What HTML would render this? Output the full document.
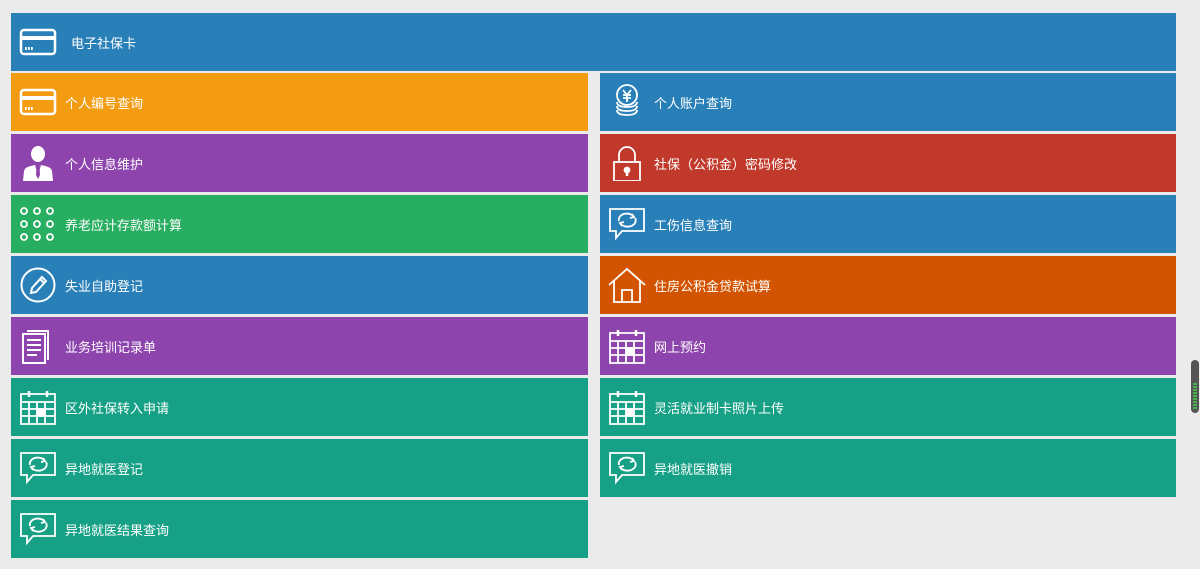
<!DOCTYPE html>
<html><head><meta charset="utf-8"><style>
body{margin:0;width:1200px;height:569px;background:#ebebeb;position:relative;overflow:hidden;font-family:"Liberation Sans","Noto Sans CJK SC",sans-serif}
.t{position:absolute;height:58px;color:#fff;font-size:13px;line-height:58px}
.t svg{position:absolute;left:8px;top:11px;width:38px;height:36px}
.t span{position:absolute;left:54px;top:2px}
.L{left:11px;width:577px}.R{left:600px;width:576px}
.b{background:#2980b9}.o{background:#f39c12}.p{background:#8e44ad}.g{background:#27ae60}.r{background:#c0392b}.d{background:#d35400}.e{background:#16a085}
</style></head><body>
<svg width="0" height="0" style="position:absolute">
<defs>
<symbol id="card" viewBox="0 0 38 36"><rect x="2" y="6" width="34" height="24" rx="3" fill="none" stroke="#fff" stroke-width="2.5"/><rect x="2" y="12" width="34" height="4" fill="#fff"/><rect x="6" y="23" width="1.8" height="3" fill="#fff"/><rect x="9" y="23" width="1.8" height="3" fill="#fff"/><rect x="12" y="23" width="1.8" height="3" fill="#fff"/></symbol>
<symbol id="person" viewBox="0 0 38 36"><ellipse cx="19" cy="9" rx="7" ry="8" fill="#fff"/><path d="M4 36 L5 26 Q6 22 12 21 L16 20 L19 30 L22 20 L26 21 Q32 22 33 26 L34 36Z" fill="#fff"/><path d="M17.5 22 L20.5 22 L21 30 L19 34 L17 30Z" fill="#8e44ad"/></symbol>
<symbol id="dots" viewBox="0 0 38 36" fill="none" stroke="#fff" stroke-width="1.8"><circle cx="5" cy="5" r="3"/><circle cx="18" cy="5" r="3"/><circle cx="31" cy="5" r="3"/><circle cx="5" cy="18" r="3"/><circle cx="18" cy="18" r="3"/><circle cx="31" cy="18" r="3"/><circle cx="5" cy="31" r="3"/><circle cx="18" cy="31" r="3"/><circle cx="31" cy="31" r="3"/></symbol>
<symbol id="pen" viewBox="0 0 38 36" fill="none" stroke="#fff" stroke-width="2"><circle cx="19" cy="18" r="16.5"/><path d="M12 26 L13 21 L23 10 L27 14 L17 25 Z M21 12 L25 16"/></symbol>
<symbol id="doc" viewBox="0 0 38 36" fill="none" stroke="#fff" stroke-width="2"><path d="M8 3 H29 V32"/><rect x="4" y="6" width="22" height="29" fill="#8e44ad"/><path d="M8 12H22M8 17H22M8 22H22M8 27H18"/></symbol>
<symbol id="cal" viewBox="0 0 38 36" fill="none" stroke="#fff" stroke-width="1.8"><path d="M2 5H36V35H2Z"/><path d="M2 13H36M2 20H36M2 27H36M10 13V35M18 13V35M26 13V35"/><path d="M10 2V8M28 2V8" stroke-width="2.5"/><rect x="18" y="20" width="8" height="7" fill="#fff"/></symbol>
<symbol id="chat" viewBox="0 0 38 36" fill="none" stroke="#fff" stroke-width="1.8"><path d="M2 3H36V25H14L8 32V25H2Z"/><path d="M11 15A8 6 0 0 1 26 11M27 12A8 6 0 0 1 12 17"/><path d="M24 8L26 11L22 12M14 20L12 17L16 16"/></symbol>
<symbol id="coin" viewBox="0 0 38 36" fill="none" stroke="#fff" stroke-width="1.8"><circle cx="19" cy="11" r="10"/><path d="M15 6L19 11L23 6M19 11V18M15 11H23M15 14H23"/><path d="M9 18Q9 23 19 23Q29 23 29 18M9 22Q9 27 19 27Q29 27 29 22M9 26Q9 31 19 31Q29 31 29 26"/></symbol>
<symbol id="lock" viewBox="0 0 38 36" fill="none" stroke="#fff" stroke-width="1.8"><path d="M11 17V10A8 8 0 0 1 27 10V17"/><rect x="6" y="17" width="26" height="19"/><circle cx="19" cy="25" r="2.5" fill="#fff"/><path d="M19 26V31" stroke-width="2.5"/></symbol>
<symbol id="house" viewBox="0 0 38 36" fill="none" stroke="#fff" stroke-width="1.8"><path d="M1 18L19 2L37 18M6 14V35H32V14"/><path d="M14 35V23H24V35"/></symbol>
</defs></svg>

<div class="t b" style="left:11px;top:13px;width:1165px"><svg><use href="#card"/></svg><span style="left:60px">电子社保卡</span></div>

<div class="t L o" style="top:73px"><svg><use href="#card"/></svg><span>个人编号查询</span></div>
<div class="t L p" style="top:134px"><svg><use href="#person"/></svg><span>个人信息维护</span></div>
<div class="t L g" style="top:195px"><svg><use href="#dots"/></svg><span>养老应计存款额计算</span></div>
<div class="t L b" style="top:256px"><svg><use href="#pen"/></svg><span>失业自助登记</span></div>
<div class="t L p" style="top:317px"><svg><use href="#doc"/></svg><span>业务培训记录单</span></div>
<div class="t L e" style="top:378px"><svg><use href="#cal"/></svg><span>区外社保转入申请</span></div>
<div class="t L e" style="top:439px"><svg><use href="#chat"/></svg><span>异地就医登记</span></div>
<div class="t L e" style="top:500px"><svg><use href="#chat"/></svg><span>异地就医结果查询</span></div>

<div class="t R b" style="top:73px"><svg><use href="#coin"/></svg><span>个人账户查询</span></div>
<div class="t R r" style="top:134px"><svg><use href="#lock"/></svg><span>社保（公积金）密码修改</span></div>
<div class="t R b" style="top:195px"><svg><use href="#chat"/></svg><span>工伤信息查询</span></div>
<div class="t R d" style="top:256px"><svg><use href="#house"/></svg><span>住房公积金贷款试算</span></div>
<div class="t R p" style="top:317px"><svg><use href="#cal"/></svg><span>网上预约</span></div>
<div class="t R e" style="top:378px"><svg><use href="#cal"/></svg><span>灵活就业制卡照片上传</span></div>
<div class="t R e" style="top:439px"><svg><use href="#chat"/></svg><span>异地就医撤销</span></div>

<div style="position:absolute;left:1191px;top:360px;width:8px;height:53px;background:#555;border-radius:4px"></div>
<div style="position:absolute;left:1193px;top:383px;width:4px;height:26px;background:repeating-linear-gradient(#4caf50 0 2px,#555 2px 3px)"></div>
</body></html>
